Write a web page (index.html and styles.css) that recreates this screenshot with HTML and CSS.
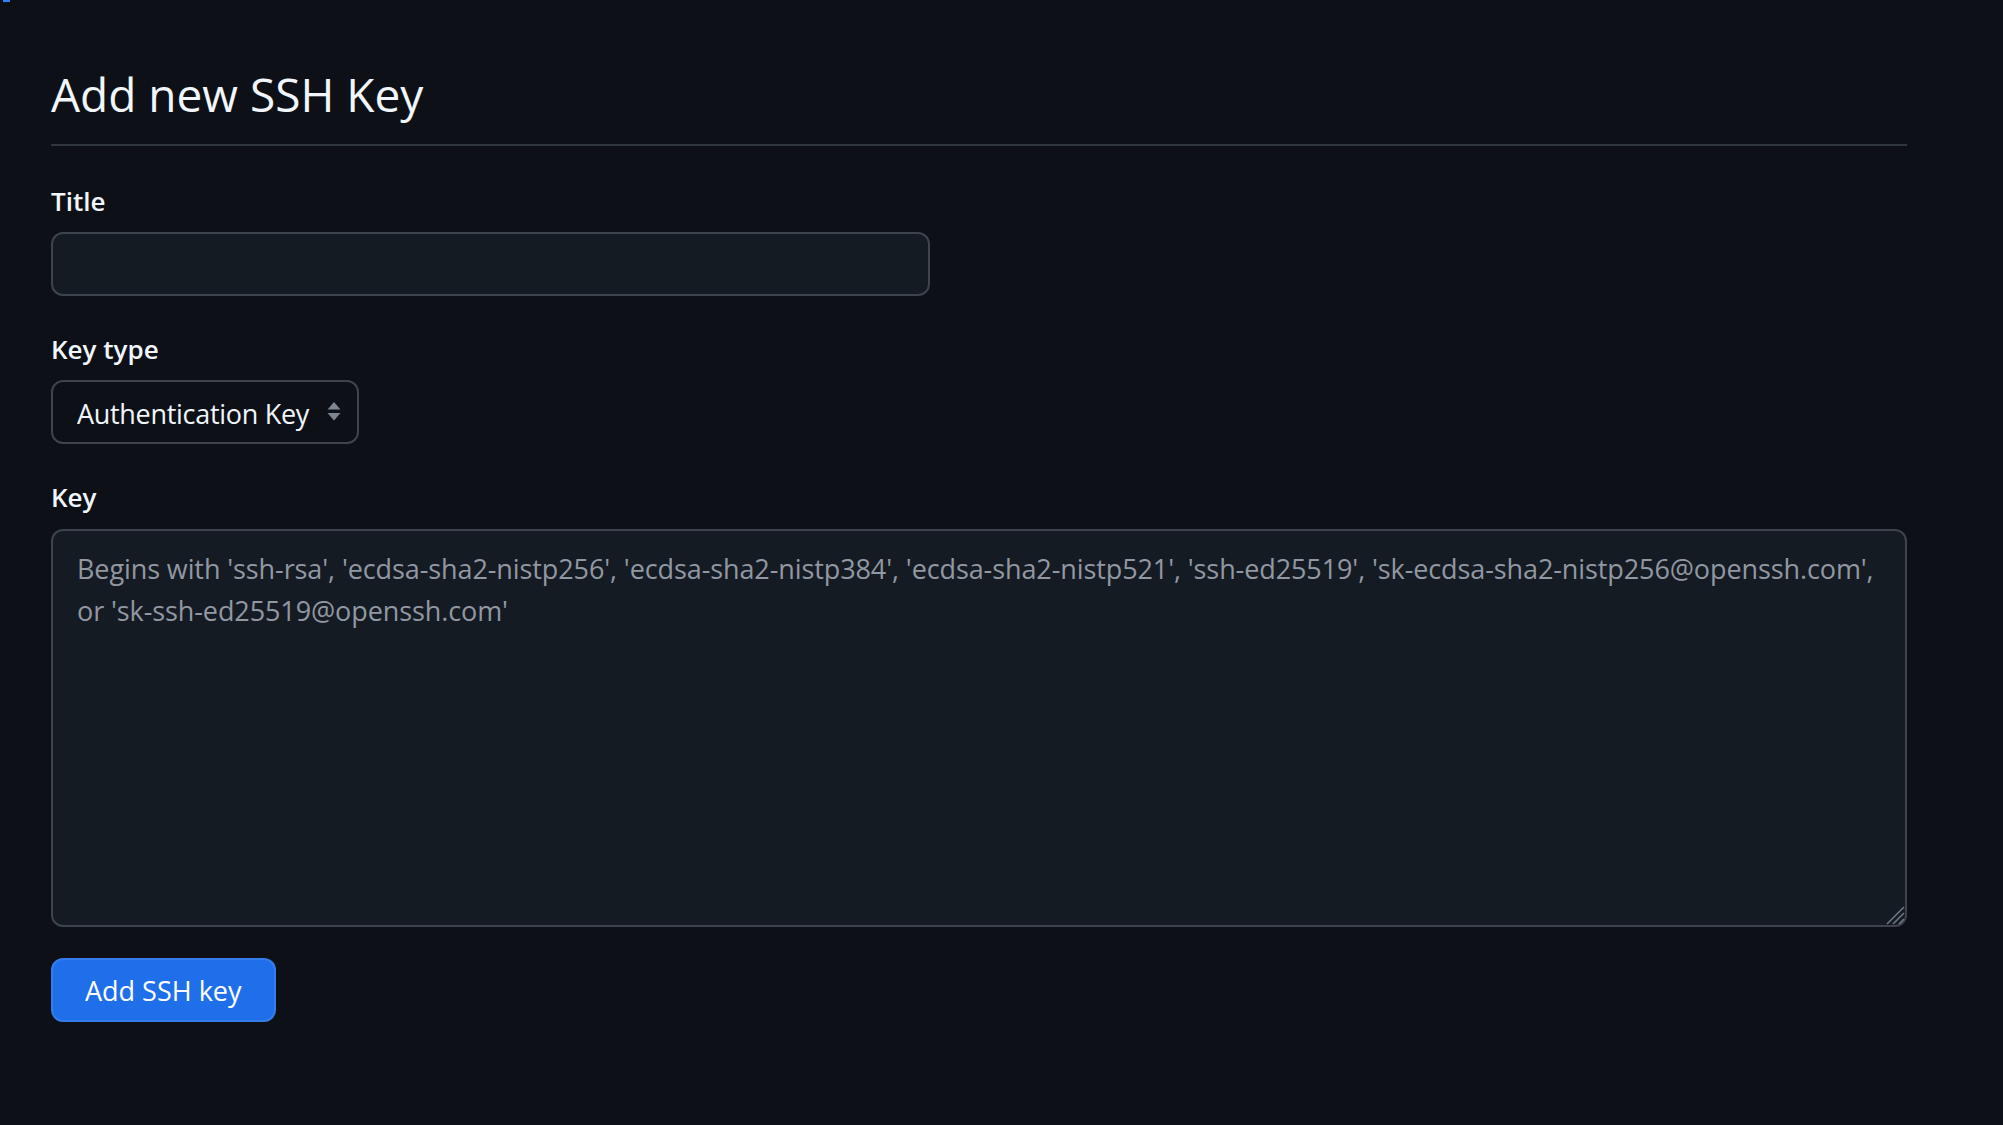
FILE: index.html
```html
<!DOCTYPE html>
<html lang="en">
<head>
<meta charset="utf-8">
<title>Add new SSH Key</title>
<link rel="stylesheet" href="styles.css">
</head>
<body>
<div class="skip-mark"></div>
<main class="page">
  <div class="subhead">
    <h1 class="subhead-heading">Add new SSH Key</h1>
  </div>
  <form class="form">
    <div class="form-group">
      <label class="form-label" for="title">Title</label>
      <input class="form-control title-input" id="title" type="text">
    </div>
    <div class="form-group">
      <label class="form-label" for="type">Key type</label>
      <div class="select-wrap">
        <select class="form-control form-select" id="type">
          <option>Authentication Key</option>
          <option>Signing Key</option>
        </select>
        <svg class="select-arrows" viewBox="0 0 16 22" width="16" height="22" aria-hidden="true">
          <path d="M8 1 L14.5 8.5 L1.5 8.5 Z" fill="#7d8590"/>
          <path d="M1.5 12 L14.5 12 L8 19.5 Z" fill="#7d8590"/>
        </svg>
      </div>
    </div>
    <div class="form-group form-group-last">
      <label class="form-label" for="key">Key</label>
      <div class="textarea-wrap">
        <textarea class="form-control key-input" id="key" placeholder="Begins with 'ssh-rsa', 'ecdsa-sha2-nistp256', 'ecdsa-sha2-nistp384', 'ecdsa-sha2-nistp521', 'ssh-ed25519', 'sk-ecdsa-sha2-nistp256@openssh.com', or 'sk-ssh-ed25519@openssh.com'"></textarea>
        <svg class="resize-grip" viewBox="0 0 22 22" width="22" height="22" aria-hidden="true">
          <path d="M21 4 L4 21 M21 10 L10 21 M21 16 L16 21" stroke="#6e7681" stroke-width="1.6" fill="none"/>
        </svg>
      </div>
    </div>
    <div class="form-actions">
      <button class="btn-primary" type="button">Add SSH key</button>
    </div>
  </form>
</main>
</body>
</html>
```
FILE: styles.css
```css
* { box-sizing: border-box; }

html, body {
  margin: 0;
  padding: 0;
  background: #0d1117;
  color: #f0f6fc;
  font-family: "Open Sans", "Noto Sans", sans-serif;
}

body {
  position: relative;
  min-height: 1125px;
}

.skip-mark {
  position: absolute;
  left: 3px;
  top: 0;
  width: 7px;
  height: 2px;
  background: #2f81f7;
}

.page {
  padding: 64px 0 0 51px;
  width: 1907px;
}

.subhead {
  padding-bottom: 20px;
  border-bottom: 2px solid #30363d;
}

.subhead-heading {
  margin: 0;
  font-size: 46px;
  font-weight: 400;
  line-height: 60px;
  color: #f0f6fc;
}

.form {
  display: flex;
  flex-direction: column;
  padding-top: 37px;
}

.form-group {
  display: flex;
  flex-direction: column;
  align-items: flex-start;
  margin-bottom: 35px;
}

.form-group-last {
  margin-bottom: 31px;
}

.form-label {
  display: block;
  font-size: 26px;
  font-weight: 600;
  line-height: 36px;
  margin-bottom: 13px;
  color: #f0f6fc;
}

.form-control {
  font-family: "Open Sans", "Noto Sans", sans-serif;
  font-size: 27px;
  letter-spacing: -0.1px;
  color: #f0f6fc;
  background: #151b23;
  border: 2px solid #3d444d;
  border-radius: 12px;
  outline: none;
}

.title-input {
  width: 879px;
  height: 64px;
  padding: 0 24px;
}

.select-wrap {
  position: relative;
}

.form-select {
  appearance: none;
  -webkit-appearance: none;
  width: 308px;
  height: 64px;
  padding: 3px 34px 0 24px;
  line-height: 40px;
  letter-spacing: -0.3px;
  background: #0d1117;
}

.select-arrows {
  position: absolute;
  right: 17px;
  top: 21px;
  pointer-events: none;
}

.textarea-wrap {
  position: relative;
  width: 1856px;
  margin-top: 1px;
}

.key-input {
  display: block;
  width: 1856px;
  height: 398px;
  padding: 17px 24px;
  line-height: 42px;
  resize: none;
}

.key-input::placeholder {
  color: #9198a1;
  opacity: 1;
}

.resize-grip {
  position: absolute;
  right: 2px;
  bottom: 2px;
  pointer-events: none;
}

.form-actions {
  display: flex;
}

.btn-primary {
  height: 64px;
  padding: 0 32px;
  font-family: "Open Sans", "Noto Sans", sans-serif;
  font-size: 27px;
  font-weight: 500;
  color: #ffffff;
  background: #1f6feb;
  border: 2px solid rgba(255, 255, 255, 0.1);
  border-radius: 12px;
  cursor: pointer;
}
```
